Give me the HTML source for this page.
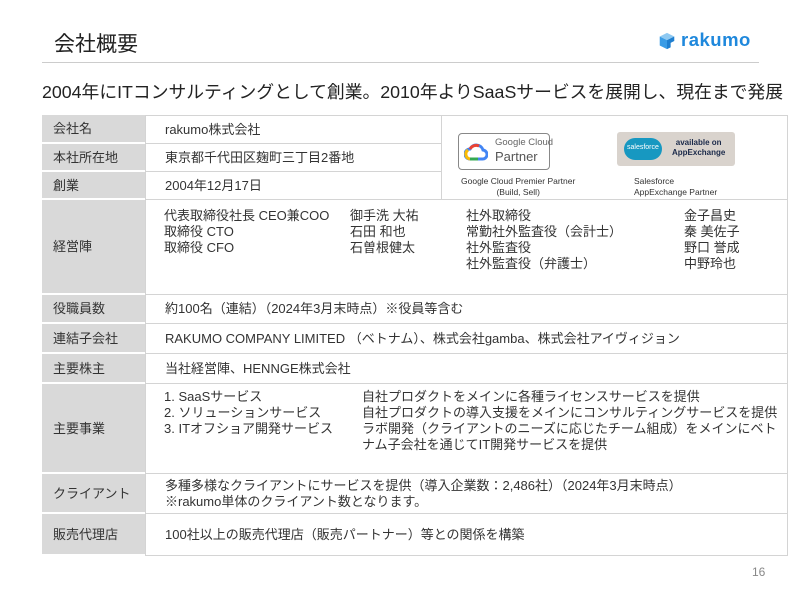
<!DOCTYPE html>
<html><head><meta charset="utf-8"><style>
*{margin:0;padding:0;box-sizing:border-box}
body{width:800px;height:600px;background:#fff;position:relative;overflow:hidden;font-family:"Liberation Sans","Noto Sans CJK JP",sans-serif;color:#333}
.a{position:absolute;white-space:nowrap}
.lab{position:absolute;left:42px;width:103px;background:#d9d9d9;border-bottom:2px solid #fff;font-size:13px;padding-left:11px;display:flex;align-items:center;padding-bottom:2px}
.cell{position:absolute;left:145px;right:12px;border:1px solid #d4d4d4;border-top:none;font-size:13px;line-height:16px;padding-left:19px;display:flex;align-items:center;white-space:nowrap}
.t{font-size:13px;line-height:16px}
</style></head><body>
<div class="a" style="left:54px;top:28px;font-size:21px;color:#222">会社概要</div>
<div style="position:absolute;left:42px;top:62px;width:717px;height:1px;background:#ccc"></div>
<div class="a" style="left:657px;top:31px">
<svg width="20" height="20" viewBox="0 0 22 22"><path d="M3 6 L11 2 L19 6 L11 10Z" fill="#8ec9f2"/><path d="M3 6 L11 10 L11 20 L3 16Z" fill="#3a9ce6"/><path d="M11 10 L19 6 L19 11 L15 13 L15 18 L11 20Z" fill="#1f7fd0"/></svg></div>
<div class="a" style="left:681px;top:29px;font-size:18.5px;font-weight:bold;color:#1f88dc;letter-spacing:0.5px">rakumo</div>
<div class="a" style="left:42px;top:78px;font-size:17.8px;color:#222">2004年にITコンサルティングとして創業。2010年よりSaaSサービスを展開し、現在まで発展</div>
<div style="position:absolute;left:145px;top:115px;width:643px;height:1px;background:#d4d4d4"></div>
<div class="lab" style="top:115px;height:29px">会社名</div>
<div class="lab" style="top:144px;height:28px">本社所在地</div>
<div class="lab" style="top:172px;height:28px">創業</div>
<div class="lab" style="top:200px;height:95px">経営陣</div>
<div class="lab" style="top:295px;height:29px">役職員数</div>
<div class="lab" style="top:324px;height:30px">連結子会社</div>
<div class="lab" style="top:354px;height:30px">主要株主</div>
<div class="lab" style="top:384px;height:90px">主要事業</div>
<div class="lab" style="top:474px;height:40px">クライアント</div>
<div class="lab" style="top:514px;height:42px">販売代理店</div>
<div class="cell" style="top:115px;height:29px;right:358px;border-top:1px solid #d4d4d4">rakumo株式会社</div>
<div class="cell" style="top:144px;height:28px;right:358px">東京都千代田区麹町三丁目2番地</div>
<div class="cell" style="top:172px;height:28px;right:358px">2004年12月17日</div>
<div style="position:absolute;left:442px;top:115px;width:346px;height:85px;border:1px solid #d4d4d4;border-left:none"></div>
<div class="cell" style="top:200px;height:95px"></div>
<div class="a t" style="left:164px;top:208px">代表取締役社長 CEO兼COO<br>取締役 CTO<br>取締役 CFO</div>
<div class="a t" style="left:350px;top:208px">御手洗 大祐<br>石田 和也<br>石曽根健太</div>
<div class="a t" style="left:466px;top:208px">社外取締役<br>常勤社外監査役（会計士）<br>社外監査役<br>社外監査役（弁護士）</div>
<div class="a t" style="left:684px;top:208px">金子昌史<br>秦 美佐子<br>野口 誉成<br>中野玲也</div>
<div class="cell" style="top:295px;height:29px">約100名（連結）（2024年3月末時点）※役員等含む</div>
<div class="cell" style="top:324px;height:30px">RAKUMO COMPANY LIMITED （ベトナム）、株式会社gamba、株式会社アイヴィジョン</div>
<div class="cell" style="top:354px;height:30px">当社経営陣、HENNGE株式会社</div>
<div class="cell" style="top:384px;height:90px"></div>
<div class="a t" style="left:164px;top:389px">1. SaaSサービス<br>2. ソリューションサービス<br>3. ITオフショア開発サービス</div>
<div class="a t" style="left:362px;top:389px">自社プロダクトをメインに各種ライセンスサービスを提供<br>自社プロダクトの導入支援をメインにコンサルティングサービスを提供<br>ラボ開発（クライアントのニーズに応じたチーム組成）をメインにベト<br>ナム子会社を通じてIT開発サービスを提供</div>
<div class="cell" style="top:474px;height:40px">多種多様なクライアントにサービスを提供（導入企業数：2,486社）（2024年3月末時点）<br>※rakumo単体のクライアント数となります。</div>
<div class="cell" style="top:514px;height:42px">100社以上の販売代理店（販売パートナー）等との関係を構築</div>
<div style="position:absolute;left:458px;top:133px;width:92px;height:37px;border:1px solid #888;border-radius:4px"></div>
<svg class="a" style="left:464px;top:142px" width="24" height="20" viewBox="0 0 24 20"><path d="M6 17 A5 5 0 0 1 6 7 A7 7 0 0 1 19 8 A4.5 4.5 0 0 1 18 17Z" fill="none" stroke="#4285f4" stroke-width="3"/><path d="M6 17 A5 5 0 0 1 4 8" fill="none" stroke="#fbbc04" stroke-width="3"/><path d="M6 7 A7 7 0 0 1 15 4" fill="none" stroke="#ea4335" stroke-width="3"/><path d="M6 17 L14 17" stroke="#34a853" stroke-width="3"/></svg>
<div class="a" style="left:495px;top:137px;font-size:9.5px;color:#666">Google Cloud</div>
<div class="a" style="left:495px;top:149px;font-size:13px;color:#555">Partner</div>
<div class="a" style="left:461px;top:176px;font-size:8.5px;line-height:11px;text-align:center;color:#333">Google Cloud Premier Partner<br>(Build, Sell)</div>
<div style="position:absolute;left:617px;top:132px;width:118px;height:34px;background:#d9d3cd;border-radius:3px"></div>
<div style="position:absolute;left:624px;top:138px;width:38px;height:22px;background:#1798c1;border-radius:11px"></div>
<div class="a" style="left:627px;top:144px;font-size:7px;color:#fff">salesforce</div>
<div class="a" style="left:672px;top:138px;font-size:8px;line-height:10px;font-weight:bold;color:#1b2a4a;text-align:center">available on<br>AppExchange</div>
<div class="a" style="left:634px;top:176px;font-size:8.5px;line-height:11px;color:#333">Salesforce<br>AppExchange Partner</div>
<div class="a" style="left:752px;top:565px;font-size:12px;color:#888">16</div>
</body></html>
